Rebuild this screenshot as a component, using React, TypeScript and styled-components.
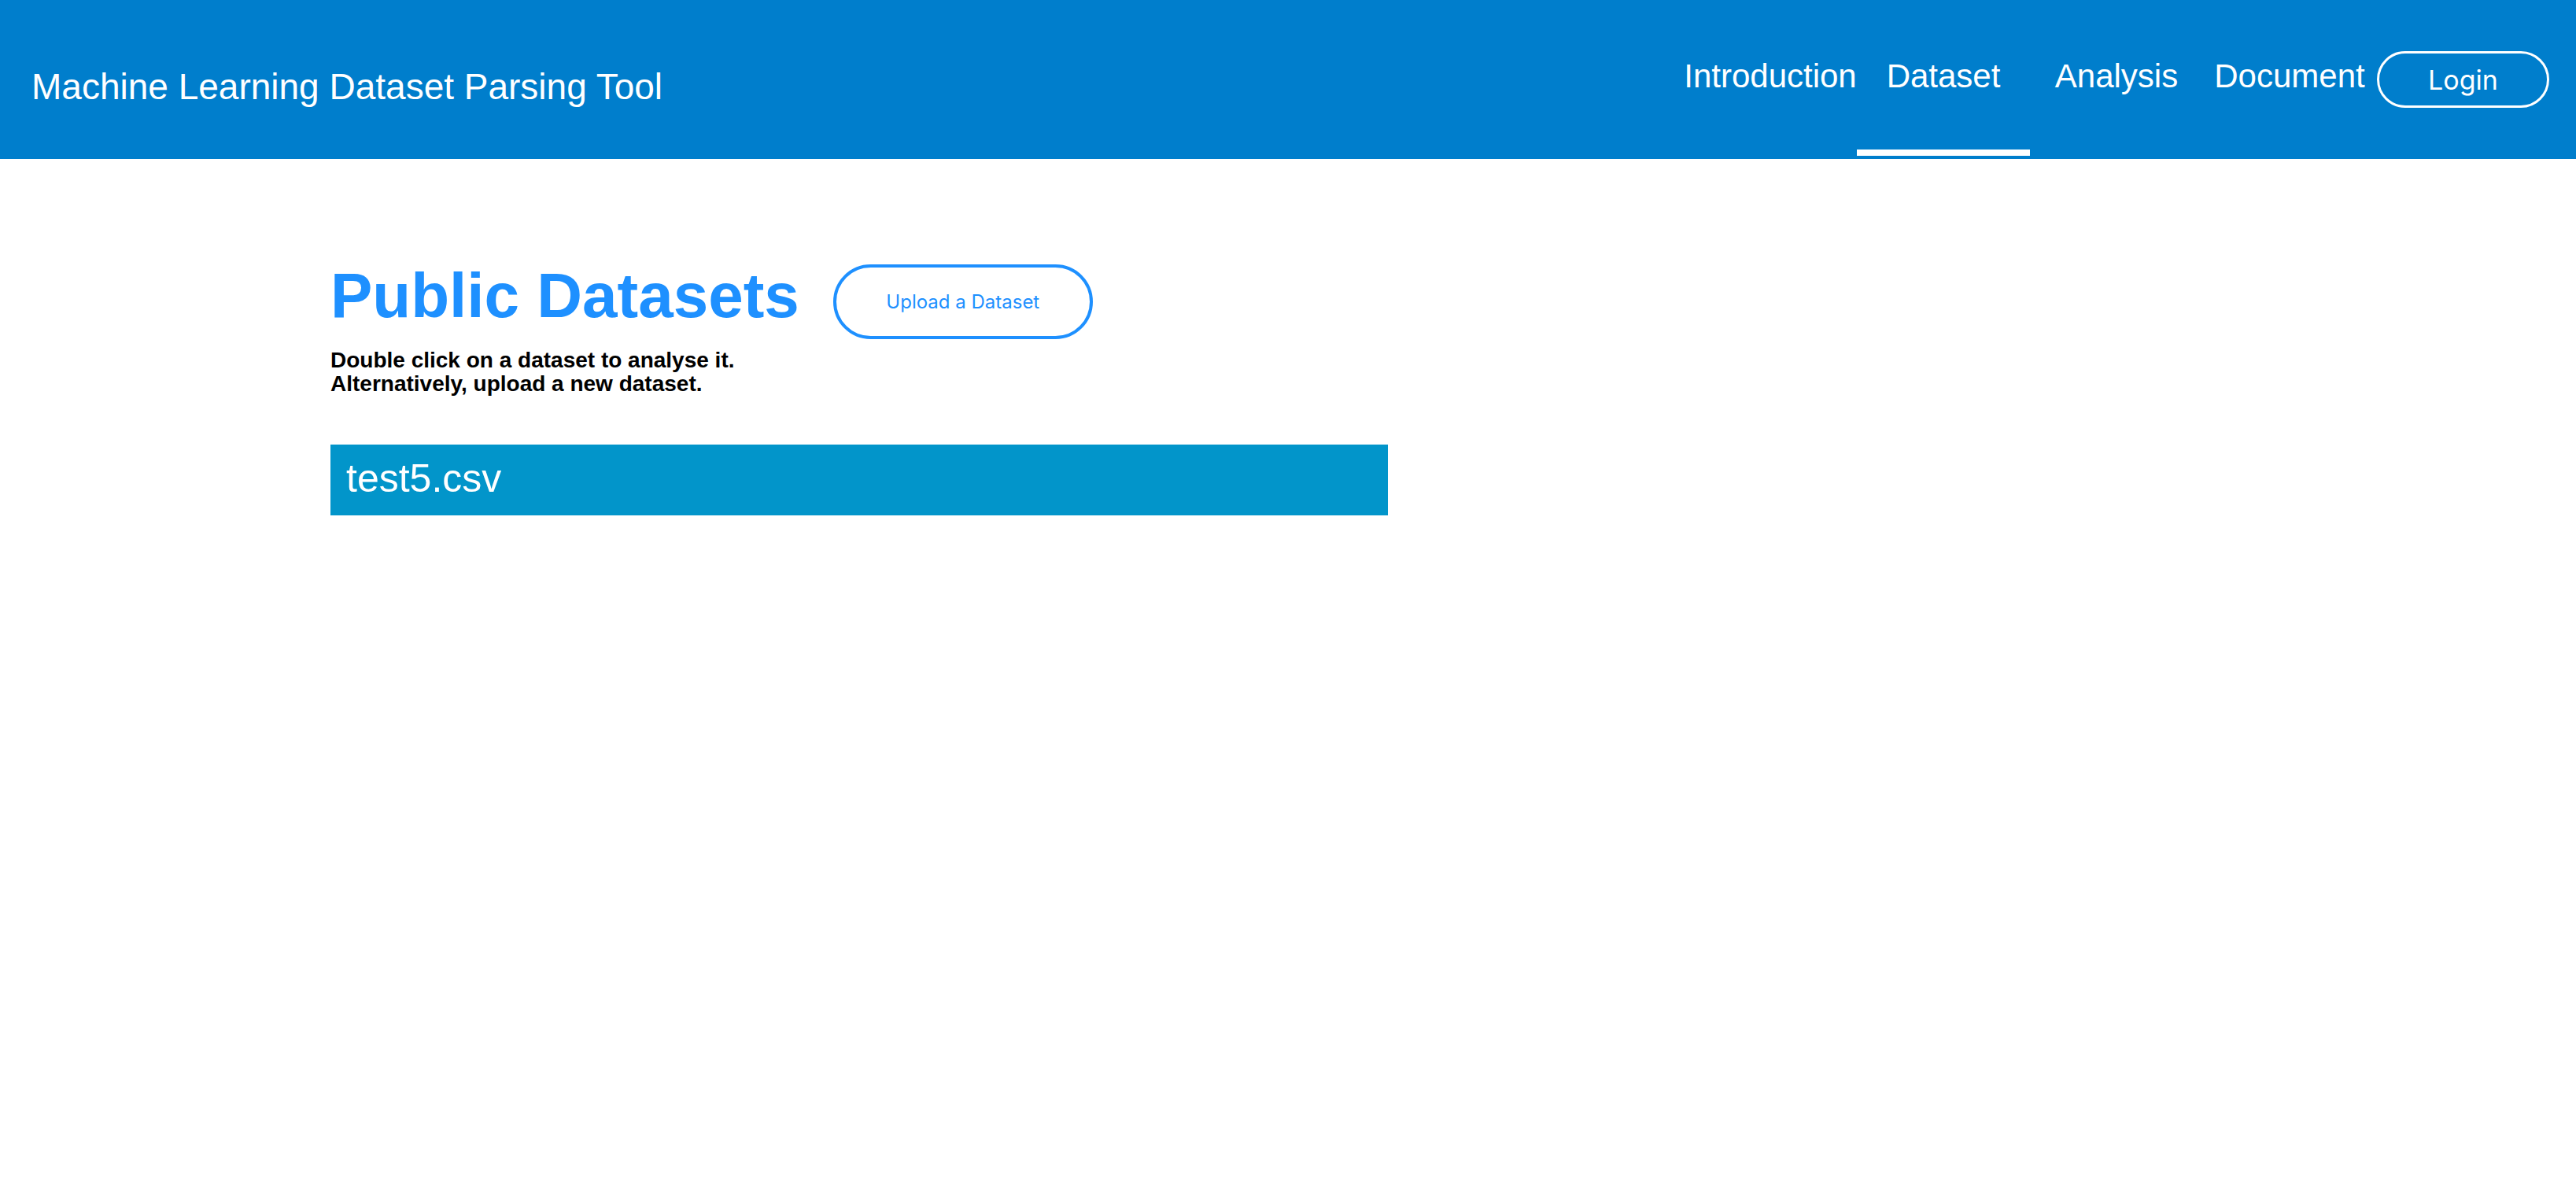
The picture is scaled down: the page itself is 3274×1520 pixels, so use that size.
import React from "react";
import styled, { createGlobalStyle } from "styled-components";

const GlobalStyle = createGlobalStyle`
  html, body {
    margin: 0;
    padding: 0;
    background: #ffffff;
    font-family: "Liberation Sans", Arial, Helvetica, sans-serif;
  }
  * { box-sizing: border-box; }
`;

const Header = styled.header`
  height: 202px;
  background: #007ecc;
  display: flex;
  align-items: flex-start;
  padding: 0 34px 0 40px;
  color: #ffffff;
`;

const Brand = styled.div`
  flex: 1;
  margin-top: 83px;
  font-size: 46px;
  line-height: normal;
  white-space: nowrap;
`;

const Nav = styled.nav`
  display: flex;
  align-items: flex-start;
`;

const NavItem = styled.a<{ $active?: boolean }>`
  width: 220px;
  height: 198px;
  padding-top: 73px;
  text-align: center;
  font-size: 42px;
  line-height: normal;
  color: #ffffff;
  text-decoration: none;
  white-space: nowrap;
  display: flex;
  justify-content: center;
  border-bottom: 8px solid ${(p) => (p.$active ? "#ffffff" : "transparent")};
`;

const LoginButton = styled.button`
  margin-top: 65px;
  margin-left: 1px;
  width: 219px;
  height: 72px;
  border: 3px solid #ffffff;
  border-radius: 40px;
  background: transparent;
  color: #ffffff;
  font-family: Inter, "Noto Sans", sans-serif;
  font-size: 34px;
  display: flex;
  align-items: center;
  justify-content: center;
  padding: 0;
`;

const Main = styled.main`
  padding: 134px 0 0 420px;
`;

const TitleRow = styled.div`
  display: flex;
  align-items: flex-start;
  gap: 43px;
`;

const Heading = styled.h1`
  margin: 0;
  font-size: 80px;
  line-height: 80px;
  font-weight: 700;
  color: #1e90ff;
  white-space: nowrap;
`;

const UploadButton = styled.button`
  width: 330px;
  height: 95px;
  border: 4px solid #1e90ff;
  border-radius: 50px;
  background: #ffffff;
  color: #1e90ff;
  font-family: Inter, "Noto Sans", sans-serif;
  font-size: 24px;
  display: flex;
  align-items: center;
  justify-content: center;
  padding: 0;
`;

const Hint = styled.p`
  margin: 12px 0 0;
  font-size: 28px;
  line-height: 30px;
  font-weight: 700;
  color: #000000;
`;

const DatasetList = styled.ul`
  list-style: none;
  margin: 62px 0 0;
  padding: 0;
  width: 1344px;
`;

const DatasetRow = styled.li`
  height: 90px;
  padding: 14px 20px 0;
  background: #0295ca;
  color: #ffffff;
  font-size: 50px;
  line-height: normal;
`;

export default function App() {
  return (
    <>
      <GlobalStyle />
      <Header>
        <Brand>Machine Learning Dataset Parsing Tool</Brand>
        <Nav>
          <NavItem>Introduction</NavItem>
          <NavItem $active>Dataset</NavItem>
          <NavItem>Analysis</NavItem>
          <NavItem>Document</NavItem>
          <LoginButton>Login</LoginButton>
        </Nav>
      </Header>
      <Main>
        <TitleRow>
          <Heading>Public Datasets</Heading>
          <UploadButton>Upload a Dataset</UploadButton>
        </TitleRow>
        <Hint>
          Double click on a dataset to analyse it.
          <br />
          Alternatively, upload a new dataset.
        </Hint>
        <DatasetList>
          <DatasetRow>test5.csv</DatasetRow>
        </DatasetList>
      </Main>
    </>
  );
}
